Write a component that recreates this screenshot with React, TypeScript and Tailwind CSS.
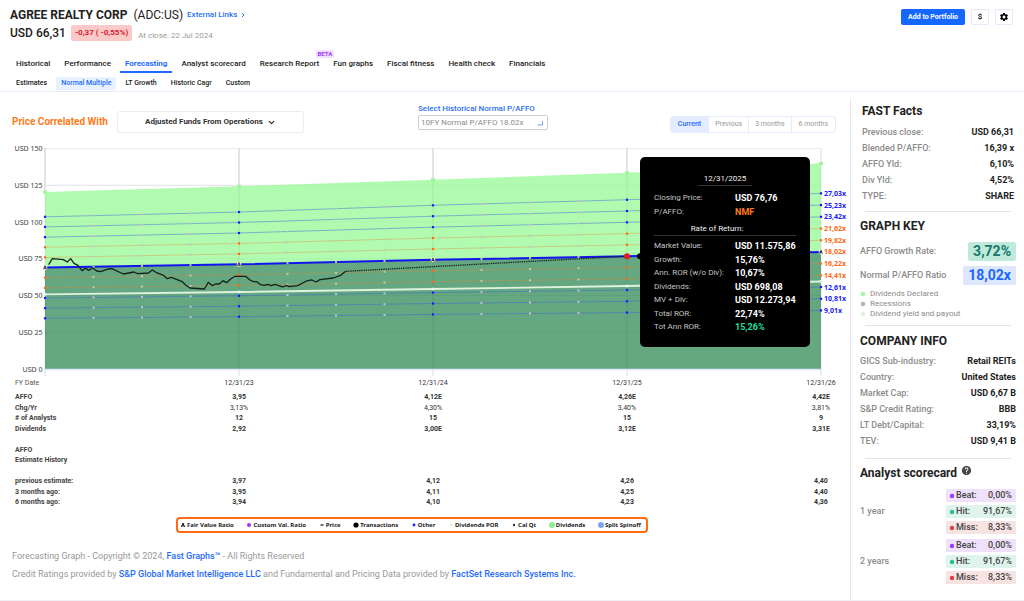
import React from "react";
import { ChevronDown } from "lucide-react";
import { MdSettings, MdHelp } from "react-icons/md";

const YEARS_X = [45, 239, 433, 627, 821];
const AFFO = [3.83, 3.95, 4.12, 4.26, 4.42];
const TOP_Y = [192, 186.3, 179.7, 172.7, 163.5];
const DIV_Y = [294.3, 292, 289, 286, 281.5];
const BLUE = "#1a1aff";
const ORANGE = "#ff6a13";

const RATIOS = [
  { value: 27.03, label: "27,03x", color: BLUE },
  { value: 25.23, label: "25,23x", color: BLUE },
  { value: 23.42, label: "23,42x", color: BLUE },
  { value: 21.62, label: "21,62x", color: ORANGE },
  { value: 19.82, label: "19,82x", color: ORANGE },
  { value: 18.02, label: "18,02x", color: ORANGE },
  { value: 16.22, label: "16,22x", color: ORANGE },
  { value: 14.41, label: "14,41x", color: ORANGE },
  { value: 12.61, label: "12,61x", color: BLUE },
  { value: 10.81, label: "10,81x", color: BLUE },
  { value: 9.01, label: "9,01x", color: BLUE },
];

const PRICE =
  "146,374 157,356 190,359 202,366 212,356 222,370 234,376 246,392 257,385 267,391 278,384 290,393 302,395 325,387 336,386 370,402 402,396 413,401 445,399 457,390 468,397 490,406 502,416 514,412 545,424 558,436 570,444 613,447 625,427 637,437 647,432 658,432 669,422 680,428 692,417 705,409 737,409 750,420 760,425 770,425 782,434 793,436 803,433 813,437 825,433 848,441 860,436 868,440 893,437 920,423 936,420 948,426 960,419 1000,414 1022,406 1037,394";

const yOf = (usd: number) => 369 - usd * 1.47;
const pts = (ys: number[]) => ys.map((y, i) => `${YEARS_X[i]},${y}`).join(" ");

function Chart() {
  const fair = AFFO.map((a) => yOf(a * 18.02));
  return (
    <svg viewBox="0 140 850 237" className="block h-auto w-full" role="img" aria-label="Price correlated with adjusted funds from operations">
      {[0, 25, 50, 75, 100, 125, 150].map((v) => (
        <line key={v} x1="45" x2="821" y1={yOf(v)} y2={yOf(v)} stroke="#e9e9ee" strokeWidth="1" />
      ))}
      <polygon points={`${pts(TOP_Y)} 821,369 45,369`} fill="#b1fbb1" />
      <polygon points={`${pts(fair)} 821,369 45,369`} fill="#64a780" />
      {[25, 50, 75, 100, 125].map((v) => (
        <line key={v} x1="45" x2="821" y1={yOf(v)} y2={yOf(v)} stroke="#000" strokeOpacity="0.03" />
      ))}
      {YEARS_X.map((x, i) => (
        <g key={x}>
          <line x1={x} x2={x} y1="148" y2={TOP_Y[i]} stroke="#dcdce0" strokeWidth={i === 4 ? 1 : 1.6} />
          <line x1={x} x2={x} y1={TOP_Y[i]} y2="369" stroke="#000" strokeOpacity="0.07" />
          <line x1={x} x2={x} y1="369" y2="376" stroke="#d7dcf3" />
          <rect x={x - 2} y={TOP_Y[i] - 1.5} width="4" height="3" fill="#9df79d" />
        </g>
      ))}
      <line x1="45" x2="821" y1="369.5" y2="369.5" stroke="#dfe3f5" strokeWidth="1.5" />

      {RATIOS.filter((r) => r.value !== 18.02).map((r) => (
        <polyline key={r.label} points={pts(AFFO.map((a) => yOf(a * r.value)))} fill="none"
          stroke={r.color === BLUE ? "#3d62d8" : "#e08a3c"} strokeOpacity={r.color === BLUE ? 0.6 : 0.5} strokeWidth="0.8" />
      ))}
      <polyline points={pts(DIV_Y)} fill="none" stroke="#dff3df" strokeWidth="1.8" />
      <polyline points={pts(fair)} fill="none" stroke="#1414ee" strokeWidth="2" />
      {RATIOS.map((r) => (
        <g key={r.label}>
          {[0, 1, 2, 3].flatMap((i) =>
            [0.25, 0.5, 0.75].map((t) => {
              const x = YEARS_X[i] + (YEARS_X[i + 1] - YEARS_X[i]) * t;
              const y = yOf((AFFO[i] + (AFFO[i + 1] - AFFO[i]) * t) * r.value);
              return <rect key={`${i}-${t}`} x={x - 1} y={y - 1} width="2" height="2" fill="#c2c8c4" />;
            })
          )}
          {r.value !== 18.02 &&
            AFFO.map((a, i) => (
              <rect key={i} x={YEARS_X[i] - 1.1} y={yOf(a * r.value) - 1.1} width="2.2" height="2.2" fill={r.color} />
            ))}
        </g>
      ))}
      {DIV_Y.map((y, i) => (
        <rect key={i} x={YEARS_X[i] - 1.3} y={y - 1.3} width="2.6" height="2.6" fill="#e9f8e9" />
      ))}
      {[0, 1, 2, 4].map((i) => (
        <g key={i}>
          <rect x={YEARS_X[i] - 2.2} y={fair[i] - 2.3} width="4.4" height="4.6" fill="#fff" fillOpacity="0.85" />
          <path d={`M${YEARS_X[i] - 1.4} ${fair[i] + 1.8}L${YEARS_X[i]} ${fair[i] - 1.8}L${YEARS_X[i] + 1.4} ${fair[i] + 1.8}M${YEARS_X[i] - 0.9} ${fair[i] + 0.7}h1.8`} stroke="#222" strokeWidth="0.9" fill="none" />
        </g>
      ))}
      <g transform="translate(0 140) scale(0.3333)">
        <polyline points={PRICE} fill="none" stroke="#16231b" strokeWidth="3.9" strokeLinejoin="round" />
      </g>
      <line x1="346" y1="271.3" x2="627" y2="256.2" stroke="#16231b" strokeWidth="1.3" strokeDasharray="1.3 0.9" />
      <circle cx="627" cy="256.3" r="3" fill="#e01b24" />
      <circle cx="640" cy="256.3" r="3" fill="#000" />

      <g className="font-['Noto_Sans',sans-serif] text-[7px]" fill="#555" stroke="#555" strokeWidth="0.1">
        {[0, 25, 50, 75, 100, 125, 150].map((v) => (
          <text key={v} x="42.5" y={yOf(v) + 2.5} textAnchor="end">USD {v}</text>
        ))}
      </g>
      <g className="font-['Noto_Sans',sans-serif] text-[7px] font-bold">
        {RATIOS.map((r) => (
          <text key={r.label} x="824" y={yOf(4.42 * r.value) + 2.5} fill={r.color}>{r.label}</text>
        ))}
      </g>
    </svg>
  );
}

const TIP_TOP = [
  ["Closing Price:", "USD 76,76", "text-white"],
  ["P/AFFO:", "NMF", "text-[#ff7a1a]"],
];
const TIP_ROWS = [
  ["Market Value:", "USD 11.575,86", "text-white"],
  ["Growth:", "15,76%", "text-white"],
  ["Ann. ROR (w/o Div):", "10,67%", "text-white"],
  ["Dividends:", "USD 698,08", "text-white"],
  ["MV + Div:", "USD 12.273,94", "text-white"],
  ["Total ROR:", "22,74%", "text-white"],
  ["Tot Ann ROR:", "15,26%", "text-[#1fe0a0]"],
];

function TipRows({ rows }: { rows: string[][] }) {
  return (
    <dl>
      {rows.map(([k, v, c]) => (
        <div key={k} className="flex h-[13px] items-center even:h-[14px]">
          <dt className="w-[81px] shrink-0 whitespace-nowrap text-[#c4c4c4]">{k}</dt>
          <dd className={`whitespace-nowrap text-[9px] font-bold ${c}`}>{v}</dd>
        </div>
      ))}
    </dl>
  );
}

function Tooltip() {
  return (
    <div role="tooltip" className="absolute left-[75.3%] top-[7%] h-[190px] w-[170px] rounded-[5px] bg-black px-[14px] pt-4 text-[8px] leading-3">
      <p className="mx-auto w-[54px] border-b border-[#333] text-center text-[#eee]">12/31/2025</p>
      <div className="pt-[6px]">
        <TipRows rows={TIP_TOP} />
      </div>
      <p className="mt-1 border-b border-[#333] pr-4 text-center text-[#eee]">Rate of Return:</p>
      <div className="pt-[4px]">
        <TipRows rows={TIP_ROWS} />
      </div>
    </div>
  );
}

const DATA: { label: string; cells: string[]; light?: boolean }[] = [
  { label: "AFFO", cells: ["3,95", "4,12E", "4,26E", "4,42E"] },
  { label: "Chg/Yr", cells: ["3,13%", "4,30%", "3,40%", "3,81%"], light: true },
  { label: "# of Analysts", cells: ["12", "15", "15", "9"] },
  { label: "Dividends", cells: ["2,92", "3,00E", "3,12E", "3,31E"] },
  { label: "", cells: ["", "", "", ""] },
  { label: "AFFO", cells: ["", "", "", ""] },
  { label: "Estimate History", cells: ["", "", "", ""] },
  { label: "", cells: ["", "", "", ""] },
  { label: "previous estimate:", cells: ["3,97", "4,12", "4,26", "4,40"] },
  { label: "3 months ago:", cells: ["3,95", "4,11", "4,25", "4,40"] },
  { label: "6 months ago:", cells: ["3,94", "4,10", "4,23", "4,36"] },
];

function DataTable() {
  return (
    <div className="pl-[15px] pr-px pt-px">
      <table className="w-full table-fixed text-[7px] leading-[10px] text-[#333]">
        <colgroup>
          <col />
          {[0, 1, 2, 3].map((i) => (
            <col key={i} className="w-[23.26%]" />
          ))}
        </colgroup>
        <thead>
          <tr className="h-[14px] align-top">
            <th scope="col" className="whitespace-nowrap p-0 text-left font-normal text-[#555]">FY Date</th>
            {["12/31/23", "12/31/24", "12/31/25", "12/31/26"].map((d) => (
              <th key={d} scope="col" className="p-0 text-right font-normal">
                <span className="block ml-auto w-14 text-center">{d}</span>
              </th>
            ))}
          </tr>
        </thead>
        <tbody>
          {DATA.map((r, i) => (
            <tr key={i} className="h-[10px] align-top odd:h-[11px]">
              <th scope="row" className="whitespace-nowrap p-0 text-left font-bold text-[#444]">{r.label}</th>
              {r.cells.map((c, j) => (
                <td key={j} className={`p-0 text-right ${r.light ? "font-normal" : "font-bold"}`}>
                  <span className="block ml-auto w-14 text-center">{c}</span>
                </td>
              ))}
            </tr>
          ))}
        </tbody>
      </table>
    </div>
  );
}

function Dot({ r, fill }: { r: number; fill: string }) {
  return (
    <svg viewBox="0 0 6 6" className="size-[6px] shrink-0" aria-hidden="true">
      <circle cx="3" cy="3" r={r} fill={fill} />
    </svg>
  );
}

function Legend() {
  const items: [React.ReactNode, string][] = [
    [<svg viewBox="0 0 6 6" className="size-[6px]"><path d="M1.4 5 3 1 4.600 5M2 3.800h2" stroke="#111" strokeWidth="1" fill="none" /></svg>, "Fair Value Ratio"],
    [<Dot r={2} fill="#a333f5" />, "Custom Val. Ratio"],
    [<svg viewBox="0 0 6 6" className="size-[6px]"><path d="M1.500 3h3" stroke="#111" strokeWidth="1.200" /></svg>, "Price"],
    [<Dot r={2.600} fill="#000" />, "Transactions"],
    [<Dot r={1.400} fill={BLUE} />, "Other"],
    [<Dot r={1.500} fill="#dcf3dc" />, "Dividends POR"],
    [<Dot r={1.200} fill="#333" />, "Cal Qt"],
    [<Dot r={3} fill="#90ee90" />, "Dividends"],
    [<Dot r={3} fill="#7ba9f0" />, "Split Spinoff"],
  ];
  return (
    <ul className="mx-auto flex h-4 w-[472px] items-center justify-between rounded-[4px] border-2 border-[#ff6a13] pl-[2px] pr-[5px] font-['Noto_Sans',sans-serif] text-[6px] font-bold leading-[10px] text-[#222]">
      {items.map(([icon, label]) => (
        <li key={label} className="flex items-center gap-px whitespace-nowrap">
          {icon}
          {label}
        </li>
      ))}
    </ul>
  );
}

function Facts({ rows }: { rows: string[][] }) {
  return (
    <dl className="text-[9px]">
      {rows.map(([k, v]) => (
        <div key={k} className="flex h-4 items-center justify-between">
          <dt className="font-medium text-[#8b8b8b]">{k}</dt>
          <dd className="font-bold text-[#222]">{v}</dd>
        </div>
      ))}
    </dl>
  );
}

const SCORES = [
  ["Beat:", "0,00%", "bg-[#efe0fb]", "#9b3bff"],
  ["Hit:", "91,67%", "bg-[#dff4ec]", "#27c08a"],
  ["Miss:", "8,33%", "bg-[#f8e3e3]", "#e04040"],
];

function Score({ label }: { label: string }) {
  return (
    <div className="flex items-center justify-between">
      <h3 className="text-[9px] font-medium text-[#8b8b8b]">{label}</h3>
      <ul className="flex w-[70px] flex-col gap-[3px]">
        {SCORES.map(([k, v, bg, dot]) => (
          <li key={k} className={`flex h-[13px] items-center rounded-[1px] pl-[3px] pr-1 text-[9px] font-medium text-[#444] ${bg}`}>
            <Dot r={2.2} fill={dot} />
            <span className="ml-px">{k}</span>
            <span className="ml-auto">{v}</span>
          </li>
        ))}
      </ul>
    </div>
  );
}

function Sidebar() {
  const heading = "text-[12px] font-bold leading-4 text-[#222]";
  const rule = "mx-[5px] border-[#e4e4e4]";
  return (
    <aside className="mt-[6px] w-[174px] shrink-0 border-l border-[#e8e8ee] pl-[9px] pr-2">
      <section className="pl-[2px] pr-[2px] pt-[5px]">
        <h2 className={heading}>FAST Facts</h2>
        <div className="pt-[6px]">
          <Facts rows={[["Previous close:", "USD 66,31"], ["Blended P/AFFO:", "16,39 x"], ["AFFO Yld:", "6,10%"], ["Div Yld:", "4,52%"], ["TYPE:", "SHARE"]]} />
        </div>
      </section>
      <hr className={`mt-[6px] ${rule}`} />
      <section className="pt-[6px]">
        <h2 className={heading}>GRAPH KEY</h2>
        <dl className="flex flex-col gap-[5px] pt-2 text-[9px] font-medium text-[#8b8b8b]">
          <div className="flex items-center justify-between">
            <dt>AFFO Growth Rate:</dt>
            <dd className="rounded-[2px] bg-[#bfe9db] px-[5px] text-[14px] font-bold leading-[19px] text-[#16786c]">3,72%</dd>
          </div>
          <div className="flex items-center justify-between">
            <dt>Normal P/AFFO Ratio</dt>
            <dd className="rounded-[2px] bg-[#dce7fd] px-[5px] text-[14px] font-bold leading-[19px] text-[#1a66ff]">18,02x</dd>
          </div>
        </dl>
        <ul className="pt-1 text-[8px] leading-[10px] text-[#8b8b8b]">
          {[["Dividends Declared", "#a6f7a6"], ["Recessions", "#b5b5b5"], ["Dividend yield and payout", "#dff3df"]].map(([t, c]) => (
            <li key={t} className="flex items-center gap-1">
              <Dot r={2.3} fill={c} />
              {t}
            </li>
          ))}
        </ul>
      </section>
      <hr className={`mt-[6px] ${rule}`} />
      <section className="pt-[7px]">
        <h2 className={heading}>COMPANY INFO</h2>
        <div className="pt-[5px]">
          <Facts rows={[["GICS Sub-industry:", "Retail REITs"], ["Country:", "United States"], ["Market Cap:", "USD 6,67 B"], ["S&P Credit Rating:", "BBB"], ["LT Debt/Capital:", "33,19%"], ["TEV:", "USD 9,41 B"]]} />
        </div>
      </section>
      <hr className={`mt-2 ${rule}`} />
      <section className="pt-[6px]">
        <h2 className={`flex items-start gap-1 ${heading}`}>
          Analyst scorecard
          <MdHelp className="size-[11px] text-[#444]" aria-hidden="true" />
        </h2>
        <div className="flex flex-col gap-[5px] pt-2">
          <Score label="1 year" />
          <Score label="2 years" />
        </div>
      </section>
    </aside>
  );
}

const NAV = ["Historical", "Performance", "Forecasting", "Analyst scorecard", "Research Report", "Fun graphs", "Fiscal fitness", "Health check", "Financials"];
const SUBNAV = ["Estimates", "Normal Multiple", "LT Growth", "Historic Cagr", "Custom"];

function Header() {
  return (
    <header className="border-b border-[#e9edfa]">
      <div className="flex items-start justify-between pl-[10px] pr-[11px] pt-[7px]">
        <div>
          <div className="flex h-4 items-center gap-1">
            <h1 className="flex gap-[6px] text-[12px] text-[#222]">
              <span className="font-bold">AGREE REALTY CORP</span>
              <span>(ADC:US)</span>
            </h1>
            <a href="#links" className="flex items-center gap-1 text-[8px] font-medium text-[#2b70f5]">
              External Links
              <svg viewBox="0 0 4 6" className="h-[6px] w-1" aria-hidden="true"><path d="M.8.800l2.200 2.200-2.200 2.200" fill="none" stroke="currentColor" strokeWidth="1" /></svg>
            </a>
          </div>
          <div className="mt-[2px] flex h-4 items-center">
            <span className="text-[12px] font-medium text-[#222]">USD 66,31</span>
            <span className="ml-[5px] rounded-[2px] bg-[#fcc9c9] px-1 text-[8px] font-bold leading-4 text-[#d6202b]">-0,37 ( -0,55%)</span>
            <span className="ml-[6px] pt-[5px] text-[8px] text-[#9a9a9a]">At close: 22 Jul 2024</span>
          </div>
        </div>
        <div className="flex gap-[6px] pt-[2px]">
          <button type="button" className="h-4 rounded-[2px] bg-[#1467ff] px-[7px] text-[7px] font-bold text-white">Add to Portfolio</button>
          <button type="button" aria-label="Currency" className="flex h-4 w-[18px] items-center justify-center rounded-[1px] border border-[#e6eaf6] text-[8px] font-medium text-black">$</button>
          <button type="button" aria-label="Settings" className="flex h-4 w-[18px] items-center justify-center rounded-[1px] border border-[#e6eaf6] text-black">
            <MdSettings className="size-[10px]" />
          </button>
        </div>
      </div>
      <nav aria-label="Sections" className="mt-4 flex pl-[11px] text-[8px] font-medium text-[#222]">
        {NAV.map((n) => (
          <a key={n} href="#section" className={`relative mr-1 whitespace-nowrap px-[5px] leading-[14px] border-b-2 ${n === "Forecasting" ? "border-[#1f6bff] font-bold text-[#1f6bff]" : "border-transparent"}`}>
            {n}
            {n === "Research Report" && (
              <span className="absolute -right-[10px] -top-[7px] rounded-[1px] bg-[#f0e2ff] px-[2px] text-[6px] font-bold leading-[8px] text-[#9d3bf5]">BETA</span>
            )}
          </a>
        ))}
      </nav>
      <nav aria-label="Forecasting views" className="flex pb-px pl-[11px] pt-1 text-[7px] font-medium text-[#222]">
        {SUBNAV.map((n) => (
          <a key={n} href="#view" className={`mr-1 whitespace-nowrap rounded-[1px] px-[5px] leading-[13px] ${n === "Normal Multiple" ? "bg-[#e8f1ff] text-[#1f6bff]" : ""}`}>{n}</a>
        ))}
      </nav>
    </header>
  );
}

export default function App() {
  return (
    <div className="flex min-h-screen flex-col border-b border-[#f0f0f3] bg-white font-['Roboto',sans-serif]">
      <Header />
      <div className="flex flex-1">
        <main className="min-w-0 flex-1">
          <div className="flex h-12 items-start pl-3 pr-[14px]">
            <label htmlFor="metric" className="w-[100px] whitespace-nowrap pt-[23px] text-[10px] font-bold leading-[14px] text-[#ff7a1a]">Price Correlated With</label>
            <div className="ml-[5px] mt-[19px] flex h-[22px] w-[187px] items-center justify-center gap-1 rounded-[3px] border border-[#ebebf0]">
              <select id="metric" className="appearance-none text-[8px] font-bold text-[#333]">
                <option>Adjusted Funds From Operations</option>
              </select>
              <ChevronDown className="size-[9px] text-[#222]" strokeWidth={3} aria-hidden="true" />
            </div>
            <div className="ml-[114px] pt-[11px]">
              <label htmlFor="normal" className="block text-[8px] font-medium leading-3 text-[#2b70f5]">Select Historical Normal P/AFFO</label>
              <div className="flex h-[15px] w-[130px] items-center justify-between rounded-[2px] border border-[#cfcfcf] px-[2px]">
                <select id="normal" className="appearance-none text-[8px] text-[#8b8b8b]">
                  <option>10FY Normal P/AFFO 18.02x</option>
                </select>
                <svg viewBox="0 0 8 8" className="size-2" aria-hidden="true"><path d="M5.500 2v4H0.500" fill="none" stroke="#6ea3f7" strokeWidth="1" /></svg>
              </div>
            </div>
            <div className="ml-auto mt-6 flex h-[17px] divide-x divide-[#e6ebfa] overflow-hidden rounded-[3px] border border-[#e6ebfa] text-[7px] text-[#999]">
              <button type="button" aria-pressed="true" className="bg-[#e4edff] px-[7px] font-medium text-[#1f6bff]">Current</button>
              <button type="button" className="px-[6px]">Previous</button>
              <button type="button" className="px-[6px]">3 months</button>
              <button type="button" className="px-[7px]">6 months</button>
            </div>
          </div>
          <div className="relative">
            <Chart />
            <Tooltip />
          </div>
          <DataTable />
          <div className="pt-[9px] pl-[2px] pr-7">
            <Legend />
          </div>
          <footer className="pl-3 pt-[14px] text-[9px] leading-[18px] text-[#999]">
            <p>Forecasting Graph - Copyright © 2024, <a href="#fast" className="font-medium text-[#1f6bff]">Fast Graphs™</a> - All Rights Reserved</p>
            <p>Credit Ratings provided by <a href="#sp" className="font-medium text-[#1f6bff]">S&P Global Market Intelligence LLC</a> and Fundamental and Pricing Data provided by <a href="#factset" className="font-medium text-[#1f6bff]">FactSet Research Systems Inc.</a></p>
          </footer>
        </main>
        <Sidebar />
      </div>
    </div>
  );
}
